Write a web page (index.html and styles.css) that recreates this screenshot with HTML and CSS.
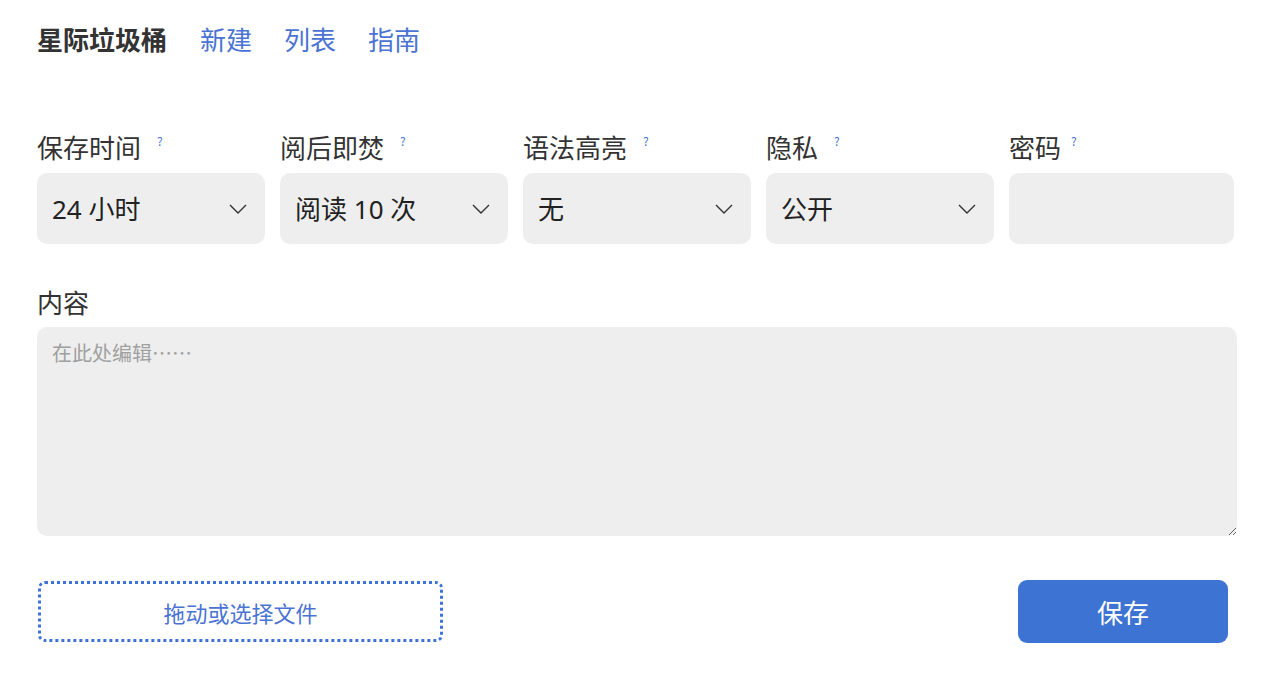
FILE: index.html
```html
<!DOCTYPE html>
<html lang="zh-CN">
<head>
<meta charset="utf-8">
<title>星际垃圾桶</title>
<link rel="stylesheet" href="styles.css">
</head>
<body>
<div class="page">
  <nav class="nav">
    <span class="brand">星际垃圾桶</span>
    <a class="link" href="#">新建</a>
    <a class="link" href="#">列表</a>
    <a class="link" href="#">指南</a>
  </nav>

  <div class="fields">
    <div class="field">
      <label class="label">保存时间<sup class="help">?</sup></label>
      <div class="select-wrap">
        <select class="select"><option>24 小时</option></select>
        <svg class="chev" width="18" height="10" viewBox="0 0 18 10"><path d="M1 1 L9 9 L17 1" fill="none" stroke="#333" stroke-width="1.4"/></svg>
      </div>
    </div>
    <div class="field">
      <label class="label">阅后即焚<sup class="help">?</sup></label>
      <div class="select-wrap">
        <select class="select"><option>阅读 10 次</option></select>
        <svg class="chev" width="18" height="10" viewBox="0 0 18 10"><path d="M1 1 L9 9 L17 1" fill="none" stroke="#333" stroke-width="1.4"/></svg>
      </div>
    </div>
    <div class="field">
      <label class="label">语法高亮<sup class="help">?</sup></label>
      <div class="select-wrap">
        <select class="select"><option>无</option></select>
        <svg class="chev" width="18" height="10" viewBox="0 0 18 10"><path d="M1 1 L9 9 L17 1" fill="none" stroke="#333" stroke-width="1.4"/></svg>
      </div>
    </div>
    <div class="field">
      <label class="label">隐私<sup class="help">?</sup></label>
      <div class="select-wrap">
        <select class="select"><option>公开</option></select>
        <svg class="chev" width="18" height="10" viewBox="0 0 18 10"><path d="M1 1 L9 9 L17 1" fill="none" stroke="#333" stroke-width="1.4"/></svg>
      </div>
    </div>
    <div class="field field-last">
      <label class="label">密码<sup class="help help-tight">?</sup></label>
      <input class="input" type="password">
    </div>
  </div>

  <div class="content">
    <label class="label">内容</label>
    <textarea class="textarea" placeholder="在此处编辑……"></textarea>
  </div>

  <div class="actions">
    <div class="upload">拖动或选择文件</div>
    <button class="save">保存</button>
  </div>
</div>
</body>
</html>
```
FILE: styles.css
```css
* { box-sizing: border-box; }
body {
  margin: 0;
  background: #fff;
  color: #333;
  font-family: "Noto Sans CJK SC", "Noto Sans", sans-serif;
}
.page {
  padding: 18px 0 0 37px;
  width: 1237px;
}
.nav {
  display: flex;
  align-items: center;
  height: 40px;
  font-size: 26px;
  gap: 32px;
}
.brand {
  font-weight: 700;
  color: #333;
  margin-right: 1px;
}
.link {
  color: #4a73d3;
  text-decoration: none;
}
.fields {
  margin-top: 71px;
  display: flex;
  gap: 15px;
  width: 1197px;
}
.field {
  flex: 1 1 0;
  display: flex;
  flex-direction: column;
  gap: 8px;
}
.field-last { flex: 0 0 225px; }
.label {
  font-size: 26px;
  line-height: 36px;
  height: 36px;
  color: #333;
  display: block;
}
.help {
  font-size: 12px;
  color: #4a73d3;
  margin-left: 16px;
  vertical-align: top;
  position: relative;
  top: -6px;
}
.help-tight { margin-left: 10px; }
.select-wrap {
  position: relative;
  height: 71px;
}
.select {
  appearance: none;
  -webkit-appearance: none;
  width: 100%;
  height: 71px;
  border: none;
  border-radius: 10px;
  background: #eeeeee;
  font-family: "Noto Sans", "Noto Sans CJK SC", sans-serif;
  font-size: 26px;
  color: #222;
  padding: 0 15px;
  outline: none;
}
.chev {
  position: absolute;
  right: 18px;
  top: 31px;
  pointer-events: none;
}
.input {
  height: 71px;
  width: 100%;
  border: none;
  border-radius: 10px;
  background: #eeeeee;
  outline: none;
}
.content {
  margin-top: 40px;
  display: flex;
  flex-direction: column;
  gap: 7px;
}
.textarea {
  width: 1200px;
  height: 209px;
  border: none;
  border-radius: 10px;
  background: #eeeeee;
  font-family: inherit;
  font-size: 20px;
  padding: 11px 15px;
  color: #333;
  outline: none;
}
.textarea::placeholder { color: #a0a0a0; }
.actions {
  margin-top: 44px;
  display: flex;
  justify-content: space-between;
  align-items: center;
  width: 1191px;
}
.upload {
  margin-left: 1px;
  width: 405px;
  height: 61px;
  border: 3px dotted #3d72d6;
  border-radius: 7px;
  display: flex;
  align-items: center;
  justify-content: center;
  color: #4a73d3;
  font-size: 22px;
}
.save {
  width: 210px;
  height: 63px;
  border: none;
  border-radius: 9px;
  background: #3d73d3;
  color: #fff;
  font-family: inherit;
  font-size: 26px;
}
```
